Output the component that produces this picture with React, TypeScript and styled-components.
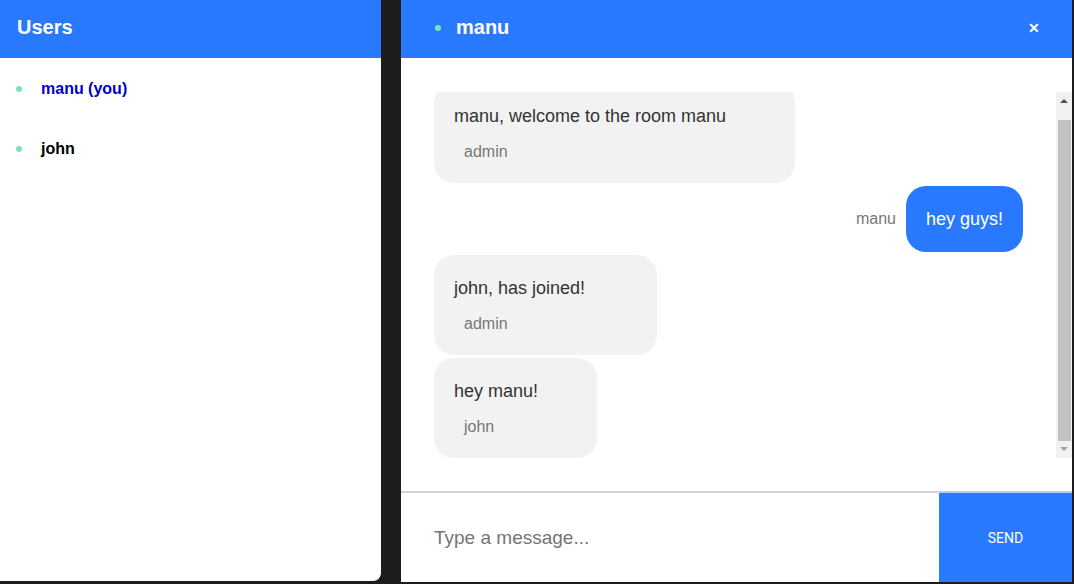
import * as React from 'react';
import { useEffect, useRef } from 'react';
import styled, { createGlobalStyle } from 'styled-components';

const BLUE = '#2979ff';

const GlobalStyle = createGlobalStyle`
	* { box-sizing: border-box; }
	body {
		margin: 0;
		background: #1c1c1f;
		font-family: 'Liberation Sans', Arial, sans-serif;
	}
`;

type Message = { id: number; text: string; user: string; own?: boolean; width?: number };

const users = [
	{ name: 'manu (you)', self: true },
	{ name: 'john', self: false },
];

const messages: Message[] = [
	{ id: 1, text: 'manu, welcome to the room manu', user: 'admin', width: 361 },
	{ id: 2, text: 'hey guys!', user: 'manu', own: true },
	{ id: 3, text: 'john, has joined!', user: 'admin', width: 223 },
	{ id: 4, text: 'hey manu!', user: 'john', width: 163 },
];

export default function App() {
	const listRef = useRef<HTMLDivElement>(null);
	useEffect(() => {
		if (listRef.current) listRef.current.scrollTop = listRef.current.scrollHeight;
	}, []);

	return (
		<>
			<GlobalStyle />
			<Layout>
				<Sidebar>
					<SideHeader>Users</SideHeader>
					<UserList>
						{users.map(u => (
							<UserRow key={u.name} $self={u.self}>
								<Dot />
								{u.name}
							</UserRow>
						))}
					</UserList>
				</Sidebar>
				<ChatPanel>
					<ChatHeader>
						<RoomName>
							<Dot />
							manu
						</RoomName>
						<CloseButton>✕</CloseButton>
					</ChatHeader>
					<MessagesWrap>
						<MessageList ref={listRef}>
							{messages.map(m =>
								m.own ? (
									<OwnRow key={m.id}>
										<OwnName>{m.user}</OwnName>
										<OwnBubble>{m.text}</OwnBubble>
									</OwnRow>
								) : (
									<Bubble key={m.id} $w={m.width}>
										<BubbleText>{m.text}</BubbleText>
										<Meta>{m.user}</Meta>
									</Bubble>
								)
							)}
						</MessageList>
						<ScrollRail>
							<ScrollArrow $up />
							<ScrollTrack>
								<ScrollThumb />
							</ScrollTrack>
							<ScrollArrow />
						</ScrollRail>
					</MessagesWrap>
					<Composer>
						<Input placeholder="Type a message..." />
						<SendButton>SEND</SendButton>
					</Composer>
				</ChatPanel>
			</Layout>
		</>
	);
}

const Layout = styled.div`
	display: flex;
	gap: 20px;
	height: 582px;
	padding-right: 2px;
`;

const Sidebar = styled.aside`
	width: 381px;
	height: 581px;
	background: #fff;
	border-bottom-right-radius: 8px;
	overflow: hidden;
	display: flex;
	flex-direction: column;
`;

const SideHeader = styled.div`
	height: 58px;
	background: ${BLUE};
	color: #fff;
	font-size: 20px;
	font-weight: 700;
	display: flex;
	align-items: center;
	padding: 0 17px 4px;
`;

const UserList = styled.div`
	display: flex;
	flex-direction: column;
	padding-top: 1px;
`;

const Dot = styled.span`
	width: 6px;
	height: 6px;
	border-radius: 50%;
	background: #7ce3b4;
	flex-shrink: 0;
`;

const UserRow = styled.div<{ $self: boolean }>`
	height: 60px;
	display: flex;
	align-items: center;
	gap: 19px;
	padding-left: 16px;
	font-size: 16px;
	font-weight: 700;
	color: ${p => (p.$self ? '#0000cd' : '#000')};
`;

const ChatPanel = styled.main`
	flex: 1;
	height: 582px;
	background: #fff;
	display: flex;
	flex-direction: column;
`;

const ChatHeader = styled.div`
	height: 58px;
	flex-shrink: 0;
	background: ${BLUE};
	display: flex;
	align-items: center;
	justify-content: space-between;
	padding: 0 32px 3px 34px;
	color: #fff;
`;

const RoomName = styled.div`
	display: flex;
	align-items: center;
	gap: 15px;
	font-size: 20px;
	font-weight: 700;
`;

const CloseButton = styled.span`
	font-size: 14px;
	font-weight: 700;
	cursor: pointer;
`;

const MessagesWrap = styled.div`
	flex: 1;
	min-height: 0;
	padding: 34px 0 33px;
	display: flex;
`;

const MessageList = styled.div`
	flex: 1;
	min-width: 0;
	height: 100%;
	overflow-y: scroll;
	scrollbar-width: none;
	padding: 0 33px;
	display: flex;
	flex-direction: column;
	gap: 3px;
	&::-webkit-scrollbar {
		display: none;
	}
`;

const ScrollRail = styled.div`
	width: 16px;
	flex-shrink: 0;
	background: #f1f1f1;
	display: flex;
	flex-direction: column;
`;

const ScrollArrow = styled.div<{ $up?: boolean }>`
	height: 16px;
	flex-shrink: 0;
	display: flex;
	align-items: center;
	justify-content: center;
	&::before {
		content: '';
		border-left: 4px solid transparent;
		border-right: 4px solid transparent;
		${p =>
			p.$up
				? 'border-bottom: 4px solid #505050; margin-top: 2px;'
				: 'border-top: 4px solid #a3a3a3; margin-bottom: 2px;'}
	}
`;

const ScrollTrack = styled.div`
	flex: 1;
	padding: 12px 1px 1px 2px;
	display: flex;
`;

const ScrollThumb = styled.div`
	flex: 1;
	background: #c1c1c1;
`;

const Bubble = styled.div<{ $w?: number }>`
	align-self: flex-start;
	width: ${p => (p.$w ? `${p.$w}px` : 'auto')};
	flex-shrink: 0;
	background: #f2f2f2;
	border-radius: 20px;
	padding: 20px;
`;

const BubbleText = styled.div`
	font-size: 18px;
	line-height: 26px;
	color: #333;
`;

const Meta = styled.div`
	margin-top: 12px;
	padding-left: 10px;
	font-size: 16px;
	line-height: 22px;
	color: #777;
`;

const OwnRow = styled.div`
	display: flex;
	justify-content: flex-end;
	align-items: center;
	gap: 10px;
	flex-shrink: 0;
`;

const OwnName = styled.span`
	font-size: 16px;
	color: #777;
`;

const OwnBubble = styled.div`
	background: ${BLUE};
	color: #fff;
	border-radius: 20px;
	padding: 20px;
	font-size: 18px;
	line-height: 26px;
`;

const Composer = styled.form`
	display: flex;
	height: 91px;
	flex-shrink: 0;
`;

const Input = styled.input`
	flex: 1;
	border: none;
	border-top: 2px solid #d3d3d3;
	outline: none;
	padding: 0 33px;
	font-family: 'Liberation Sans', Arial, sans-serif;
	font-size: 19px;
	color: #333;
	&::placeholder {
		color: #757575;
	}
`;

const SendButton = styled.button`
	width: 133px;
	border: none;
	border-top: 2px solid #b1cdff;
	background: ${BLUE};
	color: #fff;
	font-family: Roboto, 'Liberation Sans', sans-serif;
	font-size: 14px;
	cursor: pointer;
`;
